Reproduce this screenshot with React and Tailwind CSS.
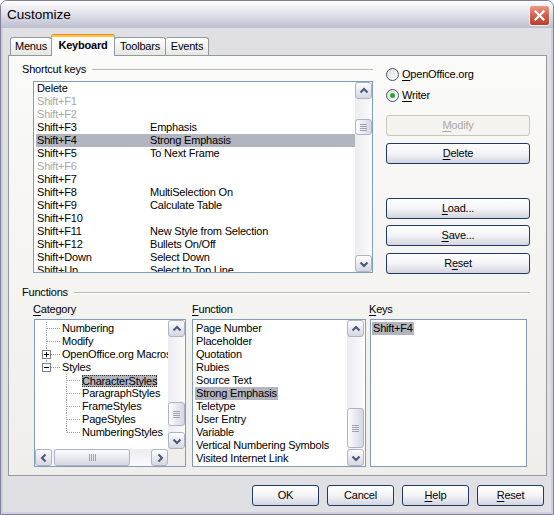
import React from "react";

const FONT = "font-['Liberation_Sans',Arial,sans-serif]";

function Chevron({ dir }) {
  const d = {
    up: "M1.5 6.5 L5 3 L8.5 6.5",
    down: "M1.5 3.5 L5 7 L8.5 3.5",
    left: "M6.5 1.5 L3 5 L6.5 8.5",
    right: "M3.5 1.5 L7 5 L3.5 8.5",
  }[dir];
  return (
    <svg width="10" height="10" viewBox="0 0 10 10">
      <path d={d} fill="none" stroke="#4a5674" strokeWidth="2" />
    </svg>
  );
}

function SBtn({ dir }) {
  return (
    <div className="w-[17px] h-[17px] shrink-0 rounded-[3px] border border-[#b0b3c6] bg-gradient-to-b from-[#fdfdfe] to-[#d5d7e2] flex items-center justify-center">
      <Chevron dir={dir} />
    </div>
  );
}

function VThumb({ className }) {
  return (
    <div className={`w-[17px] shrink-0 rounded-[3px] border border-[#b0b3c6] bg-gradient-to-r from-[#fdfdfe] to-[#d5d7e2] flex flex-col items-center justify-center gap-[1px] ${className}`}>
      <div className="w-[7px] h-[1px] bg-[#9ea1b4]" />
      <div className="w-[7px] h-[1px] bg-[#9ea1b4]" />
      <div className="w-[7px] h-[1px] bg-[#9ea1b4]" />
      <div className="w-[7px] h-[1px] bg-[#9ea1b4]" />
    </div>
  );
}

function HThumb({ className }) {
  return (
    <div className={`h-[17px] shrink-0 rounded-[3px] border border-[#b0b3c6] bg-gradient-to-b from-[#fdfdfe] to-[#d5d7e2] flex items-center justify-center gap-[1px] ${className}`}>
      <div className="h-[7px] w-[1px] bg-[#9ea1b4]" />
      <div className="h-[7px] w-[1px] bg-[#9ea1b4]" />
      <div className="h-[7px] w-[1px] bg-[#9ea1b4]" />
      <div className="h-[7px] w-[1px] bg-[#9ea1b4]" />
    </div>
  );
}

function Btn({ children, className = "", disabled = false }) {
  return (
    <div
      className={`h-[21px] flex items-center justify-center rounded-[3px] border ${
        disabled
          ? "border-[#c9c7ba] bg-[#f4f3ef] text-[#aca899]"
          : "border-[#1f3a63] bg-gradient-to-b from-[#ffffff] via-[#f4f4f7] to-[#d3d4df] text-black"
      } ${className}`}
    >
      {children}
    </div>
  );
}

function U({ children }) {
  return <span className="underline underline-offset-[2px]">{children}</span>;
}

function Radio({ checked, children }) {
  return (
    <div className="flex items-center h-[13px]">
      <div className="w-[13px] h-[13px] rounded-full border border-[#3e5776] bg-gradient-to-br from-[#dcdcd7] to-[#ffffff] flex items-center justify-center">
        {checked && <div className="w-[5px] h-[5px] rounded-full bg-[#2ca52c]" />}
      </div>
      <span className="ml-[3px]">{children}</span>
    </div>
  );
}

function GroupHead({ label, className = "" }) {
  return (
    <div className={`flex items-center h-[13px] ${className}`}>
      <span>{label}</span>
      <div className="flex-1 ml-[6px] border-t border-[#b8b8b8] border-b border-b-[#ffffff]" />
    </div>
  );
}

const shortcuts = [
  ["Delete", "", 0],
  ["Shift+F1", "", 1],
  ["Shift+F2", "", 1],
  ["Shift+F3", "Emphasis", 0],
  ["Shift+F4", "Strong Emphasis", 2],
  ["Shift+F5", "To Next Frame", 0],
  ["Shift+F6", "", 1],
  ["Shift+F7", "", 0],
  ["Shift+F8", "MultiSelection On", 0],
  ["Shift+F9", "Calculate Table", 0],
  ["Shift+F10", "", 0],
  ["Shift+F11", "New Style from Selection", 0],
  ["Shift+F12", "Bullets On/Off", 0],
  ["Shift+Down", "Select Down", 0],
  ["Shift+Up", "Select to Top Line", 0],
];

const functions = [
  "Page Number",
  "Placeholder",
  "Quotation",
  "Rubies",
  "Source Text",
  "Strong Emphasis",
  "Teletype",
  "User Entry",
  "Variable",
  "Vertical Numbering Symbols",
  "Visited Internet Link",
];

function Expander({ open }) {
  return (
    <g>
      <rect x="7.5" y="2.5" width="8" height="8" fill="#ffffff" stroke="#7f7f7f" />
      <line x1="9" y1="6.5" x2="14" y2="6.5" stroke="#000000" />
      {!open && <line x1="11.5" y1="4" x2="11.5" y2="9" stroke="#000000" />}
    </g>
  );
}

function RootGutter({ kind }) {
  // kind: leaf | closed | open-last
  return (
    <svg width="27" height="13" className="shrink-0">
      {kind === "open" ? (
        <line x1="11.5" y1="0" x2="11.5" y2="3" stroke="#a0a0a0" strokeDasharray="1 1" />
      ) : (
        <line x1="11.5" y1="0" x2="11.5" y2="13" stroke="#a0a0a0" strokeDasharray="1 1" />
      )}
      <line x1={kind === "leaf" ? 12 : 16} y1="6.5" x2="25" y2="6.5" stroke="#a0a0a0" strokeDasharray="1 1" />
      {kind === "closed" && <Expander open={false} />}
      {kind === "open" && <Expander open={true} />}
    </svg>
  );
}

function ChildGutter({ last }) {
  return (
    <svg width="47" height="13" className="shrink-0">
      <line x1="31.5" y1="0" x2="31.5" y2={last ? 6.5 : 13} stroke="#a0a0a0" strokeDasharray="1 1" />
      <line x1="32" y1="6.5" x2="46" y2="6.5" stroke="#a0a0a0" strokeDasharray="1 1" />
    </svg>
  );
}

function TreeRow({ gutter, children, selected }) {
  return (
    <div className="flex items-center h-[13px] whitespace-nowrap">
      {gutter}
      {selected ? (
        <span className="bg-[#b2b4bf] outline-1 outline-dotted outline-[#303030] -outline-offset-1 px-[0px] leading-[12px]">
          {children}
        </span>
      ) : (
        <span>{children}</span>
      )}
    </div>
  );
}

export default function App() {
  return (
    <div className={`w-[554px] h-[515px] bg-white ${FONT} text-[11px] leading-[13px] tracking-[-0.2px] text-black`}>
      <div className="w-full h-full flex flex-col rounded-t-[7px] border border-[#7f7f98] bg-[#cfd0dc] overflow-hidden">
        {/* Title bar */}
        <div className="h-[27px] shrink-0 flex items-start pl-[6px] pr-[3px] bg-gradient-to-b from-[#fefefe] via-[#e0e0e9] to-[#bdbecf]">
          <span className="flex-1 pt-[6px] text-[13.5px] leading-[16px] tracking-normal text-black">Customize</span>
          <div className="mt-[4px] w-[21px] h-[21px] rounded-[3px] border border-[#f4f4f4] bg-gradient-to-b from-[#e99a88] via-[#d2604b] to-[#b73f2c] flex items-center justify-center">
            <svg width="11" height="11" viewBox="0 0 11 11">
              <path d="M1.5 1.5 L9.5 9.5 M9.5 1.5 L1.5 9.5" stroke="#ffffff" strokeWidth="2.2" strokeLinecap="square" />
            </svg>
          </div>
        </div>

        {/* Body */}
        <div className="flex-1 mx-[2px] mb-[2px] bg-[#e0dfe3] flex flex-col">
          {/* Tabs */}
          <div className="pt-[6px] pl-[7px] flex items-end h-[27px] relative z-10">
            <div className="w-[42px] h-[18px] rounded-t-[3px] border border-b-0 border-[#919b9c] bg-gradient-to-b from-[#ffffff] to-[#e6e6e3] flex items-center justify-center">
              Menus
            </div>
            <div className="w-[64px] h-[22px] -mb-px -mx-px rounded-t-[3px] border-x border-[#919b9c] bg-[#fbfbfc] flex flex-col">
              <div className="h-[1px] bg-[#e68b2c] rounded-t-[3px]" />
              <div className="h-[2px] bg-[#ffc73c]" />
              <div className="flex-1 flex items-center justify-center font-bold pb-[2px]">Keyboard</div>
            </div>
            <div className="w-[52px] h-[18px] rounded-t-[3px] border border-b-0 border-[#919b9c] bg-gradient-to-b from-[#ffffff] to-[#e6e6e3] flex items-center justify-center">
              Toolbars
            </div>
            <div className="w-[43px] h-[18px] rounded-t-[3px] border border-b-0 border-l-0 border-[#919b9c] bg-gradient-to-b from-[#ffffff] to-[#e6e6e3] flex items-center justify-center">
              Events
            </div>
          </div>

          {/* Tab page */}
          <div className="ml-[5px] w-[539px] h-[421px] border border-[#919b9c] bg-gradient-to-b from-[#fafaf9] to-[#efeeea] flex flex-col pr-[16px]">
            {/* Section 1 */}
            <div className="flex">
              <div className="w-[364px] flex flex-col">
                <GroupHead label="Shortcut keys" className="ml-[13px] mt-[7px]" />
                <div className="ml-[24px] mt-[5px] w-[340px] h-[192px] border border-[#7f9db9] bg-white flex">
                  <div className="flex-1 overflow-hidden pl-[2px]">
                    {shortcuts.map(([k, f, s]) => (
                      <div
                        key={k}
                        className={`flex h-[13px] pl-[1px] whitespace-nowrap ${s === 2 ? "bg-[#b2b4bf]" : ""} ${s === 1 ? "text-[#a7a7a7]" : ""}`}
                      >
                        <span className="w-[113px] shrink-0">{k}</span>
                        <span>{f}</span>
                      </div>
                    ))}
                  </div>
                  <div className="w-[17px] flex flex-col bg-gradient-to-r from-[#ececf0] to-[#fbfbfc]">
                    <SBtn dir="up" />
                    <div className="h-[20px] shrink-0" />
                    <VThumb className="h-[16px]" />
                    <div className="flex-1" />
                    <SBtn dir="down" />
                  </div>
                </div>
              </div>

              <div className="ml-[13px] w-[145px] flex flex-col">
                <div className="mt-[12px]">
                  <Radio checked={false}>
                    <U>O</U>penOffice.org
                  </Radio>
                </div>
                <div className="mt-[8px]">
                  <Radio checked={true}>
                    <U>W</U>riter
                  </Radio>
                </div>
                <Btn disabled className="mt-[13px]">
                  <U>M</U>odify
                </Btn>
                <Btn className="mt-[7px]">
                  <U>D</U>elete
                </Btn>
                <Btn className="mt-[34px]">
                  <U>L</U>oad...
                </Btn>
                <Btn className="mt-[6px]">
                  <U>S</U>ave...
                </Btn>
                <Btn className="mt-[7px]">
                  R<U>e</U>set
                </Btn>
              </div>
            </div>

            {/* Section 2 */}
            <GroupHead label="Functions" className="ml-[13px] mt-[12px]" />
            <div className="flex mt-[4px] pl-[25px]">
              {/* Category */}
              <div className="w-[152px] flex flex-col">
                <div className="-ml-px h-[13px]">
                  <U>C</U>ategory
                </div>
                <div className="mt-[3px] h-[148px] border border-[#7f9db9] bg-white flex flex-col">
                  <div className="flex-1 flex min-h-0">
                    <div className="flex-1 overflow-hidden pt-[2px]">
                      <TreeRow gutter={<RootGutter kind="leaf" />}>Numbering</TreeRow>
                      <TreeRow gutter={<RootGutter kind="leaf" />}>Modify</TreeRow>
                      <TreeRow gutter={<RootGutter kind="closed" />}>OpenOffice.org Macros</TreeRow>
                      <TreeRow gutter={<RootGutter kind="open" />}>Styles</TreeRow>
                      <TreeRow gutter={<ChildGutter />} selected>
                        CharacterStyles
                      </TreeRow>
                      <TreeRow gutter={<ChildGutter />}>ParagraphStyles</TreeRow>
                      <TreeRow gutter={<ChildGutter />}>FrameStyles</TreeRow>
                      <TreeRow gutter={<ChildGutter />}>PageStyles</TreeRow>
                      <TreeRow gutter={<ChildGutter last />}>NumberingStyles</TreeRow>
                    </div>
                    <div className="w-[17px] flex flex-col bg-gradient-to-r from-[#ececf0] to-[#fbfbfc]">
                      <SBtn dir="up" />
                      <div className="h-[65px] shrink-0" />
                      <VThumb className="h-[24px]" />
                      <div className="flex-1" />
                      <SBtn dir="down" />
                    </div>
                  </div>
                  <div className="h-[17px] flex bg-gradient-to-b from-[#ececf0] to-[#fbfbfc]">
                    <SBtn dir="left" />
                    <HThumb className="ml-[2px] w-[76px]" />
                    <div className="flex-1" />
                    <SBtn dir="right" />
                    <div className="w-[17px] bg-[#efeeea]" />
                  </div>
                </div>
              </div>

              {/* Function */}
              <div className="ml-[6px] w-[174px] flex flex-col">
                <div className="h-[13px]">
                  <U>F</U>unction
                </div>
                <div className="mt-[3px] h-[148px] border border-[#7f9db9] bg-white flex">
                  <div className="flex-1 overflow-hidden pt-[2px] pl-[3px]">
                    {functions.map((f) => (
                      <div key={f} className="h-[13px] whitespace-nowrap">
                        {f === "Strong Emphasis" ? (
                          <span className="bg-[#b2b4bf] inline-block h-[13px] -ml-[1px] pl-[1px] pr-[1px]">{f}</span>
                        ) : (
                          f
                        )}
                      </div>
                    ))}
                  </div>
                  <div className="w-[17px] mr-[1px] flex flex-col bg-gradient-to-r from-[#ececf0] to-[#fbfbfc]">
                    <SBtn dir="up" />
                    <div className="h-[71px] shrink-0" />
                    <VThumb className="h-[40px]" />
                    <div className="flex-1" />
                    <SBtn dir="down" />
                  </div>
                </div>
              </div>

              {/* Keys */}
              <div className="ml-[4px] w-[157px] flex flex-col">
                <div className="-ml-px h-[13px]">
                  <U>K</U>eys
                </div>
                <div className="mt-[3px] h-[148px] border border-[#7f9db9] bg-white pt-[2px] pl-[1px]">
                  <span className="bg-[#b2b4bf] inline-block h-[13px] px-[1px]">Shift+F4</span>
                </div>
              </div>
            </div>
          </div>

          {/* Bottom buttons */}
          <div className="mt-[9px] flex justify-end gap-[8px] pr-[7px]">
            <Btn className="w-[67px]">OK</Btn>
            <Btn className="w-[67px]">Cancel</Btn>
            <Btn className="w-[67px]">
              <U>H</U>elp
            </Btn>
            <Btn className="w-[67px]">
              <U>R</U>eset
            </Btn>
          </div>
        </div>
      </div>
    </div>
  );
}
